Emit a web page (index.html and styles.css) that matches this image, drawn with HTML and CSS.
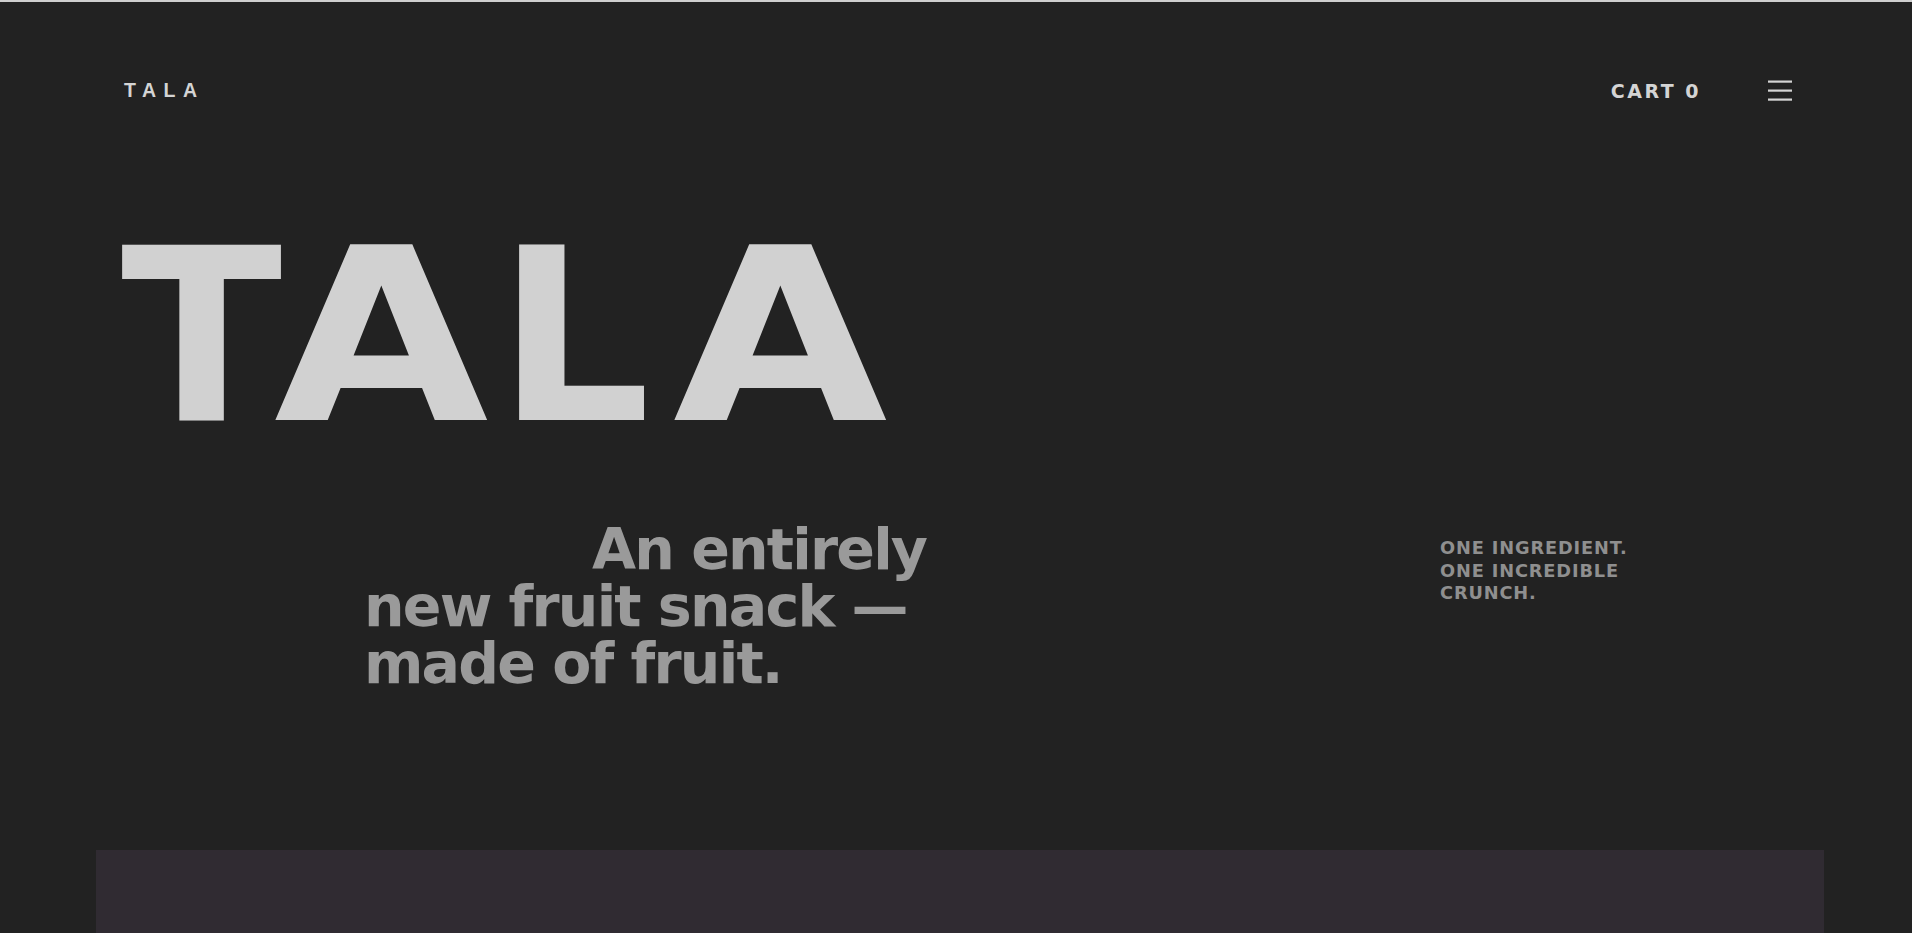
FILE: index.html
```html
<!DOCTYPE html>
<html lang="en">
<head>
<meta charset="utf-8">
<title>TALA</title>
<link rel="stylesheet" href="styles.css">
</head>
<body>
<div class="topline"></div>
<div class="page">
  <header class="header">
    <a class="logo" href="#">TALA</a>
    <nav class="nav">
      <a class="cart" href="#">CART 0</a>
      <button class="menu" aria-label="Menu">
        <svg width="24" height="21" viewBox="0 0 24 21"><rect x="0" y="0.5" width="24" height="2.2" fill="#d4d4d4"/><rect x="0" y="9.5" width="24" height="2.2" fill="#d4d4d4"/><rect x="0" y="18.5" width="24" height="2.2" fill="#d4d4d4"/></svg>
      </button>
    </nav>
  </header>
  <section class="hero">
    <h1 class="title" aria-label="TALA"><span class="ch ch-t">T</span><span class="ch ch-a1">A</span><span class="ch ch-l">L</span><span class="ch ch-a2">A</span></h1>
    <div class="intro">
      <p class="lead">An entirely new fruit snack — made of fruit.</p>
      <p class="tagline">ONE INGREDIENT.<br>ONE INCREDIBLE<br>CRUNCH.</p>
    </div>
  </section>
  <section class="panel"></section>
</div>
</body>
</html>
```

FILE: styles.css
```css
* { box-sizing: border-box; }
html, body { margin: 0; padding: 0; }
body {
  background: #222222;
  color: #d1d1d1;
  font-family: "DejaVu Sans", "Liberation Sans", sans-serif;
  overflow: hidden;
}
.topline { height: 2px; background: #cfcfcf; }
.page { padding: 0 88px 0 96px; }
.header {
  display: flex;
  justify-content: space-between;
  align-items: center;
  padding: 67px 32px 0 28px;
  height: 110px;
}
.logo {
  font-family: "Liberation Sans", Arial, sans-serif;
  font-weight: 700;
  font-size: 19.5px;
  letter-spacing: 7.5px;
  color: #d4d4d4;
  text-decoration: none;
}
.nav { display: flex; align-items: center; gap: 67px; }
.cart {
  font-family: "DejaVu Sans", sans-serif;
  font-weight: 700;
  font-size: 19px;
  letter-spacing: 2.5px;
  color: #d4d4d4;
  text-decoration: none;
}
.menu {
  background: none; border: 0; padding: 0; margin: 0;
  display: block; width: 24px; height: 21px;
}
.menu svg { display: block; }
.hero { padding-top: 104px; }
.title {
  margin: 0 0 0 25px;
  font-family: "DejaVu Sans", sans-serif;
  font-weight: 700;
  font-size: 241px;
  line-height: 241px;
  color: #d1d1d1;
  white-space: nowrap;
}
.ch { display: inline-block; }
.ch-t { margin-right: 3px; transform: scaleX(0.98); transform-origin: left center; }
.ch-a1, .ch-a2 { transform: scaleX(1.15); }
.ch-a1 { margin-right: 22px; }
.ch-l { margin-right: 36px; }
.intro {
  display: flex;
  align-items: flex-start;
  margin-top: 64px;
}
.lead {
  margin: 0 0 0 268px;
  width: 580px;
  text-indent: 228px;
  font-family: "DejaVu Sans", sans-serif;
  font-weight: 700;
  font-size: 57px;
  line-height: 57px;
  letter-spacing: -1.8px;
  color: #9a9a9a;
}
.tagline {
  margin: 16px 0 0 496px;
  font-family: "DejaVu Sans", sans-serif;
  font-weight: 700;
  font-size: 17.8px;
  line-height: 22.5px;
  letter-spacing: 0.85px;
  color: #8f8f8f;
}
.panel {
  margin-top: 158px;
  height: 83px;
  background: #302b32;
}
```
